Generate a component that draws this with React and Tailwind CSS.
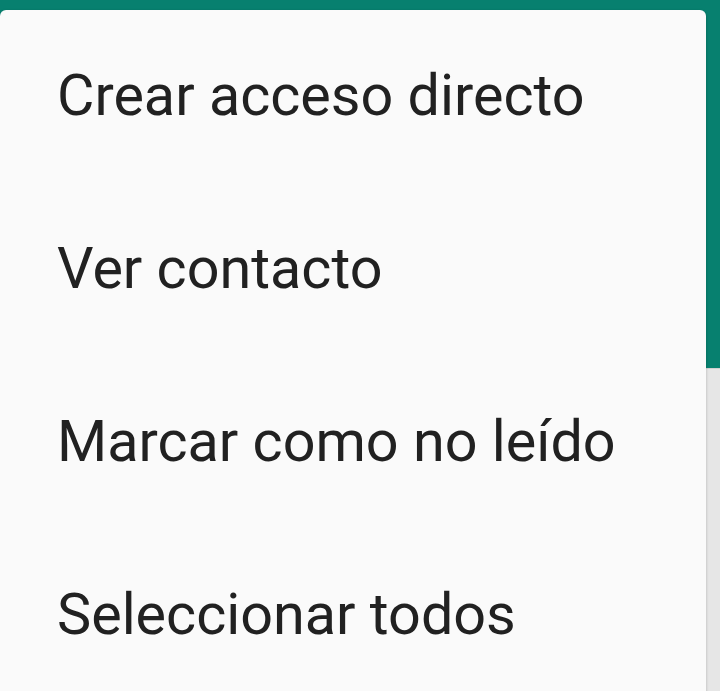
import React from 'react'

const items = ['Crear acceso directo', 'Ver contacto', 'Marcar como no leído', 'Seleccionar todos']

const App = () => {
  return (
    <div className="relative w-[720px] h-[691px] overflow-hidden bg-[#e6e6e6] font-['Roboto',sans-serif]">
      <div className="h-[369px] bg-[#07806f] border-b border-[#d0d0d0]"></div>

      {/* popup menu */}
      <div className="absolute left-0 top-[10px] w-[706px] h-[720px] bg-[#fafafa] rounded-[6px] shadow-[0_1px_3px_rgba(0,0,0,0.25)]">
        {items.map((item) => (
          <div key={item} className="h-[173px] flex items-center pl-[57px]">
            <span className="text-[57.5px] text-[#212121]">{item}</span>
          </div>
        ))}
      </div>
    </div>
  )
}

export default App
